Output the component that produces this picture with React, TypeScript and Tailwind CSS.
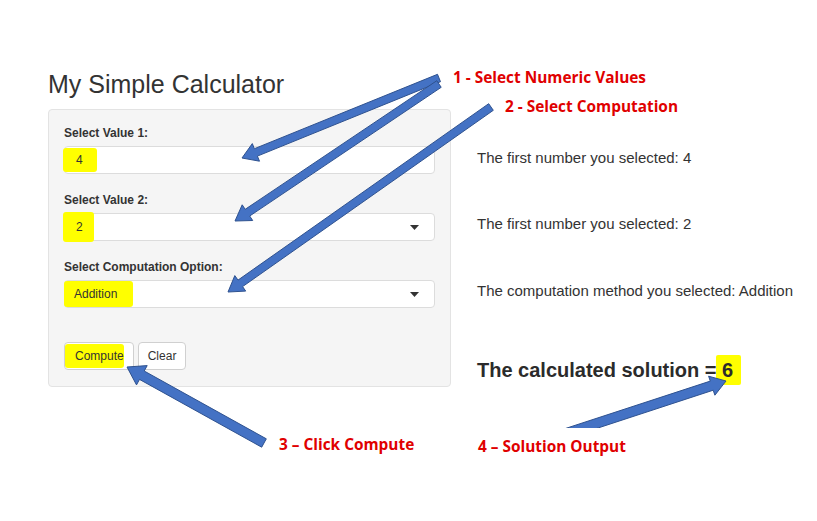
type Arrow = { x1: number; y1: number; x2: number; y2: number; w?: number; hw?: number; hl?: number };

const arrows: Arrow[] = [
  { x1: 439, y1: 78, x2: 242, y2: 158 },
  { x1: 439, y1: 84, x2: 235, y2: 221 },
  { x1: 491, y1: 107, x2: 228, y2: 292 },
  { x1: 264, y1: 443, x2: 127, y2: 367, w: 4.8, hw: 11, hl: 17 },
  { x1: 555, y1: 437, x2: 726, y2: 381, w: 4.8, hw: 10, hl: 15 },
];

function arrowPoints({ x1, y1, x2, y2, w = 4, hw = 9.5, hl = 15 }: Arrow) {
  const dx = x2 - x1;
  const dy = y2 - y1;
  const len = Math.hypot(dx, dy);
  const ux = dx / len;
  const uy = dy / len;
  const nx = -uy;
  const ny = ux;
  const bx = x2 - ux * hl;
  const by = y2 - uy * hl;
  const pts = [
    [x1 + nx * w, y1 + ny * w],
    [bx + nx * w, by + ny * w],
    [bx + nx * hw, by + ny * hw],
    [x2, y2],
    [bx - nx * hw, by - ny * hw],
    [bx - nx * w, by - ny * w],
    [x1 - nx * w, y1 - ny * w],
  ];
  return pts.map((p) => p[0].toFixed(1) + "," + p[1].toFixed(1)).join(" ");
}

function Caret() {
  return (
    <svg width="9" height="5" viewBox="0 0 9 5" className="mr-[15px]">
      <path d="M0 0 L9 0 L4.5 5 Z" fill="#333" />
    </svg>
  );
}

export default function App() {
  return (
    <div className="relative h-[521px] w-[817px] overflow-hidden bg-white font-['Liberation_Sans',Arial,sans-serif] text-[#333]">
      <div className="pl-[48px] pt-[69px]">
        <h1 className="mb-[10px] text-[25px] leading-[30px]">My Simple Calculator</h1>

        <div className="flex gap-[26px]">
          <div className="w-[403px] rounded-[4px] border border-[#e3e3e3] bg-[#f5f5f5] px-[15px] pb-[16px] pt-[15px]">
            <div className="mb-[4px] text-[12px] font-bold leading-[17px]">Select Value 1:</div>
            <div className="flex h-[28px] items-stretch rounded-[4px] border border-[#dcdcdc] bg-white">
              <span className="-ml-[2px] my-[1px] flex w-[34px] items-center rounded-[3px] bg-[#ffff00] pl-[13px] text-[12px]">4</span>
            </div>

            <div className="mb-[4px] mt-[18px] text-[12px] font-bold leading-[17px]">Select Value 2:</div>
            <div className="flex h-[28px] items-center justify-between rounded-[4px] border border-[#dcdcdc] bg-white">
              <span className="-ml-[2px] -my-[2px] flex h-[30px] w-[31px] items-center rounded-[3px] bg-[#ffff00] pl-[13px] text-[12px]">2</span>
              <Caret />
            </div>

            <div className="mb-[4px] mt-[18px] text-[12px] font-bold leading-[17px]">Select Computation Option:</div>
            <div className="flex h-[28px] items-center justify-between rounded-[4px] border border-[#dcdcdc] bg-white">
              <span className="-ml-[1px] flex h-[26px] w-[69px] items-center rounded-[3px] bg-[#ffff00] pl-[10px] text-[12px]">Addition</span>
              <Caret />
            </div>

            <div className="mt-[34px] flex gap-[4px]">
              <div className="flex h-[28px] items-stretch rounded-[4px] border border-[#d0d0d0] bg-white pr-[9px] text-[12px]">
                <span className="my-[1px] flex items-center rounded-[3px] bg-[#ffff00] pl-[10px] pr-0">Compute</span>
              </div>
              <div className="flex h-[28px] items-center rounded-[4px] border border-[#d0d0d0] bg-white px-[9px] text-[12px]">
                Clear
              </div>
            </div>
          </div>

          <div className="flex flex-col pt-[39px]">
            <p className="text-[15px] leading-[20px]">The first number you selected: 4</p>
            <p className="mt-[46px] text-[15px] leading-[20px]">The first number you selected: 2</p>
            <p className="mt-[47px] text-[15px] leading-[20px]">The computation method you selected: Addition</p>
            <p className="mt-[54px] flex items-center text-[20px] font-bold leading-[28px] text-[#2b2b2b]">
              The calculated solution =&nbsp;
              <span className="-ml-[6px] flex h-[30px] items-center rounded-[2px] bg-[#ffff00] pl-[6px] pr-[8px]">6</span>
            </p>
          </div>
        </div>
      </div>

      <svg className="pointer-events-none absolute inset-0" width="817" height="521" viewBox="0 0 817 521">
        <defs>
          <clipPath id="cut">
            <rect x="0" y="0" width="817" height="428" />
          </clipPath>
        </defs>
        {arrows.map((a, i) => (
          <polygon
            key={i}
            points={arrowPoints(a)}
            fill="#4472c4"
            stroke="#2f528f"
            strokeWidth="1"
            strokeLinejoin="miter"
            clipPath={i === 4 ? "url(#cut)" : undefined}
          />
        ))}
      </svg>

      <div className="absolute left-[453px] top-[68px] font-['Open_Sans',sans-serif] text-[15.4px] font-bold leading-[20px] text-[#e00000]">
        1 - Select Numeric Values
      </div>
      <div className="absolute left-[505px] top-[97px] font-['Open_Sans',sans-serif] text-[15.4px] font-bold leading-[20px] text-[#e00000]">
        2 - Select Computation
      </div>
      <div className="absolute left-[279px] top-[435px] font-['Open_Sans',sans-serif] text-[15.4px] font-bold leading-[20px] text-[#e00000]">
        3 – Click Compute
      </div>
      <div className="absolute left-[478px] top-[437px] font-['Open_Sans',sans-serif] text-[15.4px] font-bold leading-[20px] text-[#e00000]">
        4 – Solution Output
      </div>
    </div>
  );
}
